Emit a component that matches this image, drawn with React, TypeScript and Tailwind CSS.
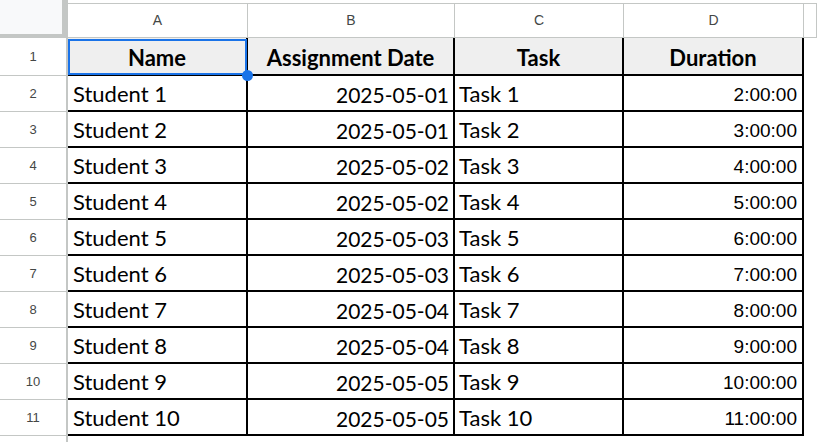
import React from 'react';

interface Row {
    name: string;
    date: string;
    task: string;
    duration: string;
}

const rows: Row[] = Array.from({ length: 10 }, (_, i) => ({
    name: `Student ${i + 1}`,
    date: `2025-05-0${Math.floor(i / 2) + 1}`,
    task: `Task ${i + 1}`,
    duration: `${i + 2}:00:00`,
}));

const calibri = { fontFamily: 'Lato, "Open Sans", sans-serif' };
const arial = { fontFamily: '"Liberation Sans", Arial, sans-serif' };

const RowNumber: React.FC<{ n: number; h: string }> = ({ n, h }) => (
    <div
        className={`w-[68px] shrink-0 ${h} flex items-center justify-center border-r-2 border-b border-[#c4c7c5] text-[13px] text-[#444746]`}
        style={arial}
    >
        {n}
    </div>
);

const App: React.FC = () => {
    return (
        <div className="w-[817px] h-[442px] overflow-hidden bg-white text-black" style={calibri}>
            {/* Column letters */}
            <div className="flex h-[38px]">
                <div className="w-[68px] shrink-0 h-[38px] bg-[#f8f9fa] border-r-[6px] border-b-[4px] border-[#c4c7c5]" />
                <div className="flex flex-1 pt-[3px]">
                    {[
                        { l: 'A', w: 'w-[180px]' },
                        { l: 'B', w: 'w-[207px]' },
                        { l: 'C', w: 'w-[169px]' },
                        { l: 'D', w: 'w-[180px]' },
                        { l: '', w: 'flex-1' },
                    ].map(c => (
                        <div
                            key={c.l || 'E'}
                            className={`${c.w} shrink-0 flex items-center justify-center border-t border-b border-r border-[#c4c7c5] text-[14px] text-[#444746]`}
                            style={arial}
                        >
                            {c.l}
                        </div>
                    ))}
                </div>
            </div>

            {/* Header row 1 */}
            <div className="flex h-[38px]">
                <RowNumber n={1} h="h-[38px]" />
                <div className="relative w-[180px] shrink-0 flex items-center justify-center pt-[2px] bg-[#efefef] border-r-2 border-b-2 border-black text-[22px] font-bold">
                    Name
                    <div className="absolute left-0 top-[1px] right-[-1px] bottom-[-1px] border-2 border-[#1a73e8]" />
                    <div className="absolute right-[-7px] bottom-[-7px] w-[11px] h-[11px] rounded-full bg-[#1a73e8] z-10" />
                </div>
                <div className="w-[207px] shrink-0 flex items-center justify-center pt-[2px] bg-[#efefef] border-r-2 border-b-2 border-black text-[22px] font-bold">
                    Assignment Date
                </div>
                <div className="w-[169px] shrink-0 flex items-center justify-center pt-[2px] bg-[#efefef] border-r-2 border-b-2 border-black text-[22px] font-bold">
                    Task
                </div>
                <div className="w-[180px] shrink-0 flex items-center justify-center pt-[2px] bg-[#efefef] border-r-2 border-b-2 border-black text-[22px] font-bold">
                    Duration
                </div>
            </div>

            {/* Data rows */}
            {rows.map((r, i) => (
                <div key={r.name} className="flex h-[36px]">
                    <RowNumber n={i + 2} h="h-[36px]" />
                    <div className="w-[180px] shrink-0 flex items-center px-[5px] pt-[2px] border-r-2 border-b-2 border-black text-[22px] leading-none">
                        {r.name}
                    </div>
                    <div className="w-[207px] shrink-0 flex items-center justify-end pr-[4px] pt-[2px] border-r-2 border-b-2 border-black text-[21px] leading-none">
                        {r.date}
                    </div>
                    <div className="w-[169px] shrink-0 flex items-center px-[4px] pt-[2px] border-r-2 border-b-2 border-black text-[22px] leading-none">
                        {r.task}
                    </div>
                    <div
                        className="w-[180px] shrink-0 flex items-center justify-end pr-[5px] pt-[2px] border-r-2 border-b-2 border-black text-[19px] leading-none"
                        style={arial}
                    >
                        {r.duration}
                    </div>
                </div>
            ))}

            <div className="flex h-[8px]">
                <div className="w-[68px] shrink-0 h-full border-r-2 border-[#c4c7c5]" />
            </div>
        </div>
    );
};

export default App;
